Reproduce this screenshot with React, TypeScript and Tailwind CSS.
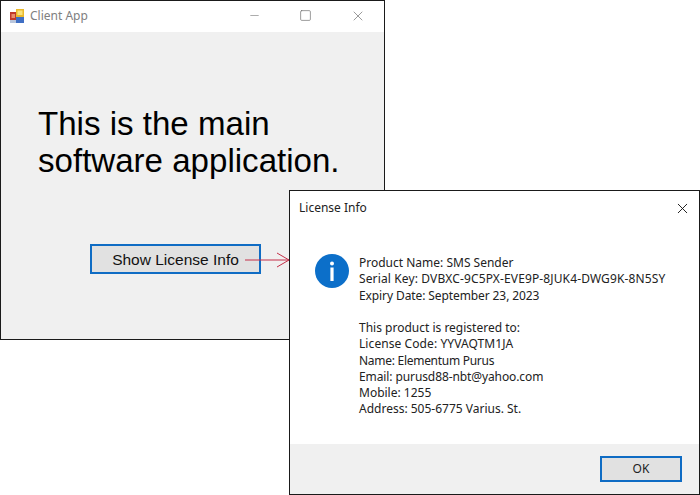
import { Minus, Square, X } from "lucide-react"

const sans = "font-['Noto_Sans','Open_Sans',sans-serif]"

function AppIcon() {
  return (
    <svg width="16" height="16" viewBox="0 0 16 16">
      <rect x="1" y="3" width="7" height="8" fill="#c0392b" />
      <rect x="2.5" y="5" width="3.5" height="4" fill="#e98b6d" />
      <rect x="7" y="0" width="8" height="8" fill="#eab92a" />
      <rect x="8.5" y="1.5" width="5" height="4.5" fill="#f9e27d" />
      <rect x="7" y="8" width="8" height="6" fill="#3f6fc4" />
      <rect x="1" y="11" width="6" height="3" fill="#b9c6dc" />
    </svg>
  )
}

function ClientWindow() {
  return (
    <div className="absolute left-0 top-0 w-[385px] h-[340px] border border-[#1a1a1a] bg-[#f0f0f0] flex flex-col">
      <div className="h-[31px] bg-white flex items-center pl-[8px] shrink-0">
        <AppIcon />
        <span className={`ml-[5px] -mt-[2px] text-[12px] text-[#808080] ${sans}`}>Client App</span>
        <div className="ml-auto -mt-[2px] flex items-center text-[#666]">
          <div className="w-[46px] mr-[2px] flex justify-center"><Minus size={13} strokeWidth={1} /></div>
          <div className="w-[52px] mr-[4px] flex justify-center"><Square size={13} strokeWidth={1.2} /></div>
          <div className="w-[46px] flex justify-center mr-[3px]"><X size={16} strokeWidth={1} /></div>
        </div>
      </div>
      <div className="flex-1 flex flex-col font-['Liberation_Sans',sans-serif]">
        <h1 className="pt-[73px] pl-[37px] text-[33.1px] leading-[37px] text-black font-normal">
          This is the main
          <br />
          software application.
        </h1>
        <button className="mt-[65px] ml-[89px] w-[171px] h-[30px] border-2 border-[#0f6cc4] bg-[#e1e1e1] text-[15.5px] text-[#111] flex items-center justify-center pt-[1px]">
          Show License Info
        </button>
      </div>
    </div>
  )
}

function LicenseDialog() {
  return (
    <div className={`absolute left-[289px] top-[190px] w-[411px] h-[305px] border border-[#1a1a1a] bg-white flex flex-col ${sans}`}>
      <div className="h-[33px] flex items-center pl-[9px] pr-[8px] pt-[1px] shrink-0">
        <span className="text-[12px] text-[#222]">License Info</span>
        <X size={17} strokeWidth={1.3} className="ml-auto text-[#111]" />
      </div>
      <div className="flex-1 flex pl-[25px] pt-[30px]">
        <svg width="34" height="34" viewBox="0 0 34 34" className="shrink-0">
          <circle cx="17" cy="17" r="17" fill="#0c6fc9" />
          <circle cx="17" cy="9.5" r="2" fill="#fff" />
          <rect x="15.4" y="13.5" width="3.2" height="13.5" fill="#fff" />
        </svg>
        <div className="ml-[10px] mt-[1px] text-[12px] leading-[16.25px] text-[#222] whitespace-nowrap">
          <p>Product Name: SMS Sender</p>
          <p className="tracking-[0.13px]">Serial Key: DVBXC-9C5PX-EVE9P-8JUK4-DWG9K-8N5SY</p>
          <p className="tracking-[-0.1px]">Expiry Date: September 23, 2023</p>
          <p className="mt-[16.25px]">This product is registered to:</p>
          <p className="tracking-[0.08px]">License Code: YYVAQTM1JA</p>
          <p className="tracking-[-0.28px]">Name: Elementum Purus</p>
          <p className="tracking-[-0.1px]">Email: purusd88-nbt@yahoo.com</p>
          <p>Mobile: 1255</p>
          <p>Address: 505-6775 Varius. St.</p>
        </div>
      </div>
      <div className="h-[50px] bg-[#f0f0f0] flex items-center justify-end pr-[17px] shrink-0">
        <button className="w-[82px] h-[26px] border-2 border-[#0f6cc4] bg-[#e1e1e1] text-[12px] text-[#222]">OK</button>
      </div>
    </div>
  )
}

export default function App() {
  return (
    <div className="relative w-[700px] h-[495px] bg-white overflow-hidden">
      <ClientWindow />
      <LicenseDialog />
      {/* arrow between the button and the dialog */}
      <svg width="46" height="18" viewBox="0 0 46 18" className="absolute left-[245px] top-[251px]">
        <path d="M0 9H44M32 2L44 9L32 16" fill="none" stroke="#c42f48" strokeWidth="1" />
      </svg>
    </div>
  )
}
